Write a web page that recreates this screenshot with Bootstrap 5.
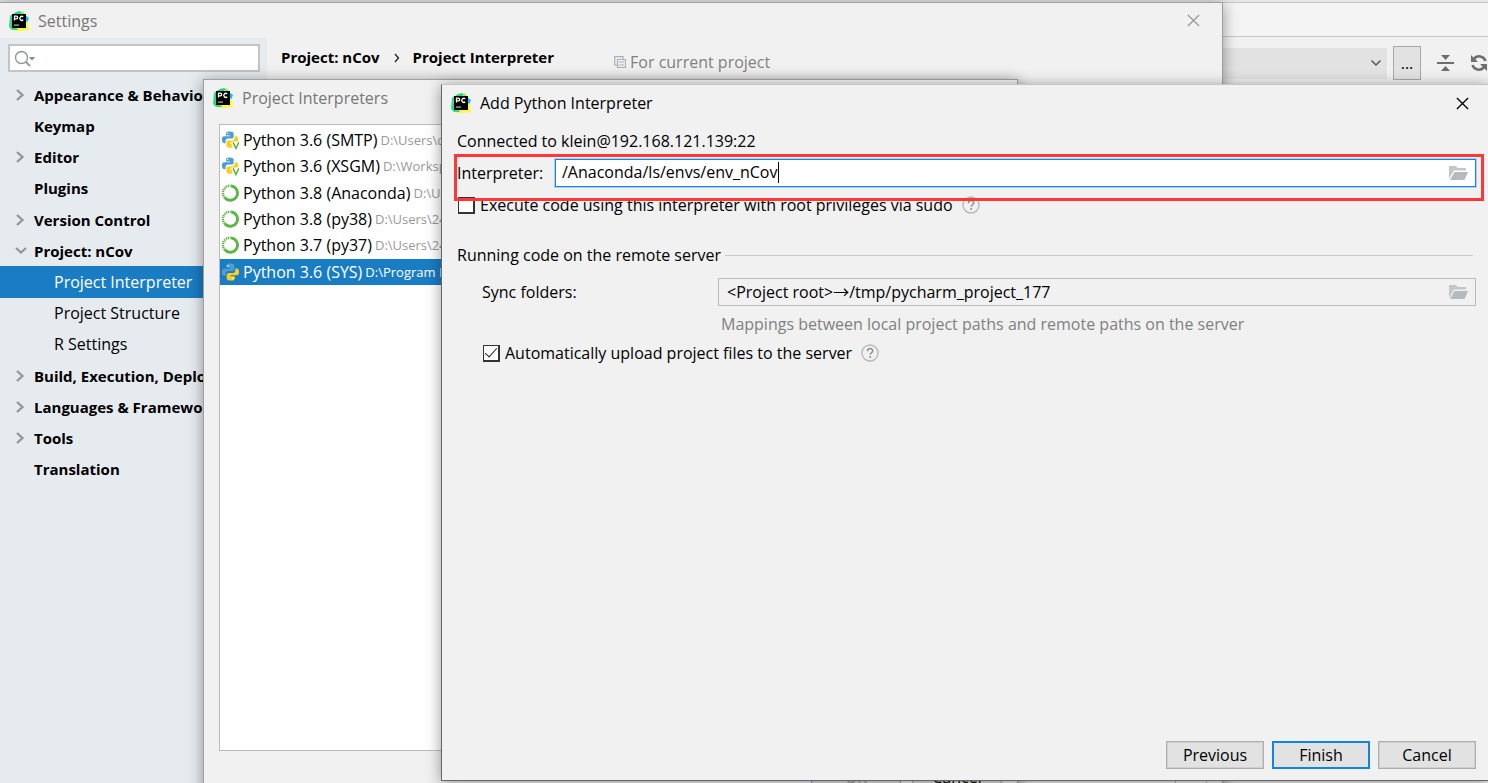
<!DOCTYPE html>
<html lang="en">
<head>
<meta charset="utf-8">
<meta name="viewport" content="width=device-width, initial-scale=1">
<title>Settings</title>
<link href="https://cdn.jsdelivr.net/npm/bootstrap@5.3.0/dist/css/bootstrap.min.css" rel="stylesheet">
<style>
  body { font-family: "Open Sans", "Noto Sans", "Noto Sans CJK SC", sans-serif; font-size: 16px; line-height: 24px; color: #000; background: #f1f1f1; }
  .desktop { height: 100vh; }
  .win { position: absolute; background: #f1f1f1; border: 1px solid #a0a0a0; box-shadow: 0 2px 14px rgba(0,0,0,.4); }
  .win-title { height: 35px; gap: 9px; padding-left: 9px; color: #777; }
  .win-close { padding: 0; border: 0; background: none; color: #999; line-height: 0; }
  .app-icon { width: 20px; height: 20px; }
  .muted { color: #808080; }

  .ide-top { height: 35px; border-top: 1px solid #c8c8c8; border-bottom: 1px solid #c8c8c8; background: #f4f4f4; }
  .ide-strip { height: 2px; background: #e6e6e6; }
  .ide-tools { gap: 6px; padding-top: 9px; }
  .combo-wrap { position: relative; }
  .combo-wrap svg { position: absolute; right: 5px; top: 11px; }
  .ide-combo { display: block; width: 200px; height: 31px; border: 0; background: #e2e2e2; appearance: none; }
  .ide-more { width: 28px; height: 34px; padding: 0; border: 1px solid #a8a8a8; background: #e2e2e2; }
  .ide-btn { padding: 0; border: 0; background: none; line-height: 0; color: #6e6e6e; }
  .ide-btn.fold { margin: 0 6px 0 10px; }

  .win-settings { left: -1px; top: 2px; right: 265px; bottom: -20px; }
  .win-settings .win-close { margin-right: 22px; }
  .settings-side { width: 267px; background: #e6ebef; padding-top: 6px; }
  .search { position: relative; margin: 0 7px 0 8px; }
  .search svg { position: absolute; left: 6px; top: 6px; }
  .search input { display: block; width: 100%; height: 28px; padding-left: 30px; border: 2px solid #c4c4c4; background: #fff; }
  .tree { display: grid; grid-auto-rows: 1fr; height: 406px; margin: 7px 0 0; padding: 0; list-style: none; }
  .tree a { display: flex; align-items: center; height: 100%; padding-left: 34px; color: #000; font-size: 15px; font-weight: 700; text-decoration: none; white-space: nowrap; position: relative; }
  .tree a.sub { padding-left: 54px; font-size: 16px; font-weight: 400; }
  .tree a.active { background: #1a7dc4; color: #fff; }
  .tree svg { position: absolute; left: 15px; }
  .crumbs { padding: 7px 0 0 14px; gap: 13px; font-size: 15px; font-weight: 700; }
  .for-project { margin-left: 47px; padding-top: 5px; gap: 4px; font-size: 16px; font-weight: 400; }
  .settings-panel { margin: 40px 15px 0 14px; border: 1px solid #b0b0b0; }
  .settings-panel-inner { margin-right: 30px; border-right: 1px solid #b0b0b0; height: 100%; }

  .win-list { left: 203px; top: 79px; right: 470px; bottom: -20px; }
  .sdk-box { margin: 9px 15px 0; height: 627px; background: #fff; border: 1px solid #bcbcbc; overflow: hidden; }
  .sdks { display: grid; grid-auto-rows: 1fr; height: 160px; margin: 0; padding: 2px 0 0; list-style: none; }
  .sdks li { display: flex; align-items: center; gap: 3px; padding-left: 1px; white-space: nowrap; }
  .sdks small { font-size: 13px; color: #999; }
  .sdks .active, .sdks .active small { background: #1a7dc4; color: #fff; }

  .win-add { left: 441px; top: 84px; right: -1px; bottom: 2px; border-color: #c4c4c4 #666 #666; }
  .win-add .win-title { height: 36px; padding-right: 19px; color: #000; }
  .add-body { padding: 8px 12px 0 15px; }
  .interp-row { position: relative; gap: 12px; margin-top: 6px; }
  .interp-row::after { content: ""; position: absolute; inset: -5px -8px -14px -3px; border: 3px solid #ff3737; pointer-events: none; }
  .interp-row label { width: 86px; white-space: nowrap; }
  .path { position: relative; }
  .path input { display: block; width: 100%; height: 28px; padding: 0 40px 2px 8px; border: 1px solid #bcbcbc; background: #f1f1f1; outline: 0; color: #000; }
  .path.focus input { border: 1px solid #1a83dc; box-shadow: 0 0 0 1px #a9d0f0; background: #fff; padding-left: 6px; }
  .path button { position: absolute; right: 7px; top: 7px; padding: 0; border: 0; background: none; line-height: 0; }
  .caret { position: absolute; left: 223px; top: 3px; width: 1px; height: 21px; background: #000; }
  .tick { appearance: none; width: 17px; height: 17px; margin: 0; border: 2px solid #333; border-width: 1px 2px 2px 1px; background: #fff; display: inline-grid; place-content: center; }
  .tick:checked::before { content: ""; width: 12px; height: 6px; margin-top: -4px; border: solid #222; border-width: 0 0 1px 1px; transform: rotate(-48deg); }
  .tick-row { gap: 5px; }
  .tick-row svg { margin-left: 4px; }
  .root-row { margin-top: 6px; padding-left: 1px; }
  .section { gap: 4px; margin-top: 26px; }
  .section hr { margin: 0 3px 0 0; border-color: #c8c8c8; opacity: 1; }
  .sync-row { margin-top: 11px; padding-left: 25px; }
  .sync-row label { width: 236px; }
  .hint { margin: 6px 0 0 264px; }
  .auto-row { margin-top: 5px; padding-left: 26px; }
  .foot { gap: 8px; padding: 0 12px 11px; }
  .dlg-btn { width: 98px; height: 28px; padding: 0; border: 1px solid #adadad; outline: 1px solid #d0d0d0; outline-offset: -2px; background: #e2e2e2; color: #000; line-height: 24px; }
  .dlg-btn.default { border: 2px solid #0f86e0; outline: 0; line-height: 22px; }
  .back-foot { gap: 11px; margin-top: 10px; padding-right: 15px; }
  .back-foot .dlg-btn { width: 90px; height: 32px; }
  .back-foot .dlg-btn:first-child { color: #999; border-color: #5aa0d8; }
</style>
</head>
<body>
<svg width="0" height="0" class="position-absolute" aria-hidden="true">
  <defs>
    <symbol id="pycharm" viewBox="0 0 20 20">
      <path d="M1 5 7 1l4-1 4 3 2 4-1 11-9 1-6-2z" fill="#21d789"/>
      <path d="M11 3 14 0l2 4 1 3-5 1z" fill="#a8e84c"/>
      <path d="M16 4l4 3-2 5-2-1z" fill="#07c3f2"/>
      <path d="M5 14l11-4 3 1 1 8-8 1H5z" fill="#fcf84a"/>
      <path d="M0 16l1-11 3-2 1 10 4 6-6 0z" fill="#2fd98a"/>
      <path d="M3 3h14v14H3z" fill="#000"/>
      <path d="M5.500 9.500V5.200h1.800a1.300 1.300 0 0 1 0 2.700H5.500M14.200 5.900a2 2 0 1 0 0 2.900" fill="none" stroke="#fff" stroke-width="1.300"/>
      <path d="M5 13.500h5v1.200H5z" fill="#bbb"/>
    </symbol>
    <symbol id="python" viewBox="0 0 20 20">
      <path d="M9.500 1C6 1 5.500 2.300 5.500 3.500v2h4.500v1H3.500C1.500 6.500 1 8.300 1 10.300s.6 3.700 2.500 3.700H5v-2.300c0-1.700 1.300-2.700 2.800-2.700h4c1.300 0 2.200-1 2.200-2.300V3.500C14 1.800 12.500 1 9.500 1z" fill="#4b9fd1"/>
      <circle cx="7.500" cy="3.400" r=".8" fill="#fff"/>
      <path d="M10.500 19c3.500 0 4-1.300 4-2.500v-2H10v-1h6.500c2 0 2.500-1.500 2.500-3.500S18.400 6.300 16.500 6.300H15v2c0 1.700-1.300 2.700-2.800 2.700h-4C6.900 11 6 12 6 13.300v3.200c0 1.700 1.500 2.500 4.500 2.500z" fill="#fdcd1e"/>
      <circle cx="12.500" cy="16.600" r=".8" fill="#fff"/>
    </symbol>
    <symbol id="venv" viewBox="0 0 20 20">
      <use href="#python" width="19" height="19"/>
      <path d="M11 11.500h9V20h-7z" fill="#fff"/><path d="M12.700 12.500 15.700 19l3-6.500" fill="none" stroke="#5fae3f" stroke-width="1.500"/>
    </symbol>
    <symbol id="conda" viewBox="0 0 20 20">
      <path d="M10.500 2.500A7.600 7.600 0 1 1 4 15" fill="none" stroke="#5cb544" stroke-width="3"/>
      <path d="M4 15A7.600 7.600 0 0 1 10 2.300" fill="none" stroke="#5cb544" stroke-width="2.600" stroke-dasharray="1.300 .8"/>
    </symbol>
    <symbol id="right" viewBox="0 0 10 14"><path d="M2 2l5.500 5L2 12" fill="none" stroke="#939699" stroke-width="2.300"/></symbol>
    <symbol id="down" viewBox="0 0 12 14"><path d="M1 4l5 4.500L11 4" fill="none" stroke="#939699" stroke-width="2.200"/></symbol>
    <symbol id="cross" viewBox="0 0 14 14"><path d="M1 1l12 12M13 1 1 13" fill="none" stroke="currentColor" stroke-width="1.400"/></symbol>
    <symbol id="folder" viewBox="0 0 20 15"><path d="M0 13V0h7l1.500 2H17v2.500H5z" fill="#c3c7ca"/><path d="M5.500 6H19l-3.500 8H1z" fill="#b5babe"/></symbol>
    <symbol id="help" viewBox="0 0 18 18"><circle cx="9" cy="9" r="8" fill="none" stroke="#b4babe" stroke-width="1.400"/><path d="M6.500 7.200c0-3.500 5.200-3.300 5.200-.3 0 1.900-2.500 1.800-2.500 3.900M9.200 12v1.900" fill="none" stroke="#8a9196" stroke-width="1.500"/></symbol>
  </defs>
</svg>

<main class="desktop position-relative overflow-hidden">
  <div class="ide-strip"></div>
  <div class="ide-top"></div>
  <div class="ide-tools d-flex justify-content-end align-items-center">
    <div class="combo-wrap"><select class="ide-combo" aria-label="Run configuration"><option></option></select>
      <svg width="12" height="8" viewBox="0 0 12 8"><path d="M1.500 1.500 6 6l4.500-4.500" fill="none" stroke="#555" stroke-width="1.500"/></svg></div>
    <button class="ide-more">...</button>
    <button class="ide-btn fold" aria-label="Collapse"><svg width="17" height="18" viewBox="0 0 17 18"><path d="M4 1h9L8.500 6zM4 17h9l-4.500-5zM0 8h17v2H0z" fill="currentColor"/></svg></button>
    <button class="ide-btn ms-1" aria-label="Refresh"><svg width="18" height="18" viewBox="0 0 18 18"><path d="M15.500 7A6.500 6.500 0 0 0 4 5M2.500 11A6.500 6.500 0 0 0 14 13" fill="none" stroke="currentColor" stroke-width="2.600"/><path d="M1 1v7h7zM17 17v-7h-7z" fill="currentColor"/></svg></button>
  </div>

  <section class="win win-settings d-flex flex-column" aria-label="Settings">
    <header class="win-title d-flex align-items-center">
      <svg class="app-icon"><use href="#pycharm"/></svg><span>Settings</span>
      <button class="win-close ms-auto" aria-label="Close"><svg width="13" height="13"><use href="#cross"/></svg></button>
    </header>
    <div class="d-flex flex-grow-1">
      <nav class="settings-side">
        <div class="search"><input type="text" aria-label="Search settings"><svg width="22" height="18" viewBox="0 0 22 18"><circle cx="7.500" cy="7.500" r="6" fill="none" stroke="#8e979d" stroke-width="1.400"/><path d="M12 12l4 4" stroke="#8e979d" stroke-width="1.800"/><path d="M15 7h6l-3 3.500z" fill="#7f8b91"/></svg></div>
        <ul class="tree">
          <li><a href="#"><svg width="10" height="14"><use href="#right"/></svg>Appearance &amp; Behavior</a></li>
          <li><a href="#">Keymap</a></li>
          <li><a href="#"><svg width="10" height="14"><use href="#right"/></svg>Editor</a></li>
          <li><a href="#">Plugins</a></li>
          <li><a href="#"><svg width="10" height="14"><use href="#right"/></svg>Version Control</a></li>
          <li><a href="#"><svg width="12" height="14"><use href="#down"/></svg>Project: nCov</a></li>
          <li><a href="#" class="sub active">Project Interpreter</a></li>
          <li><a href="#" class="sub">Project Structure</a></li>
          <li><a href="#" class="sub">R Settings</a></li>
          <li><a href="#"><svg width="10" height="14"><use href="#right"/></svg>Build, Execution, Deployment</a></li>
          <li><a href="#"><svg width="10" height="14"><use href="#right"/></svg>Languages &amp; Frameworks</a></li>
          <li><a href="#"><svg width="10" height="14"><use href="#right"/></svg>Tools</a></li>
          <li><a href="#">Translation</a></li>
        </ul>
      </nav>
      <div class="flex-grow-1 d-flex flex-column">
        <div class="crumbs d-flex">
          <span>Project: nCov</span>
          <svg class="mt-2" width="7" height="10" viewBox="0 0 7 10"><path d="M2 1l3.500 4L2 9" fill="none" stroke="#222" stroke-width="1.300"/></svg>
          <span>Project Interpreter</span>
          <span class="for-project muted d-flex align-items-center"><svg width="12" height="12" viewBox="0 0 12 12"><path d="M3 9H.7V.7H9V3M3.500 3.500h8v8h-8zM5 6h5M5 9h5" fill="none" stroke="#a9b1b6" stroke-width="1.200"/></svg>For current project</span>
        </div>
        <div class="settings-panel flex-grow-1"><div class="settings-panel-inner"></div></div>
      </div>
    </div>
  </section>

  <section class="win win-list" aria-label="Project Interpreters">
    <header class="win-title d-flex align-items-center"><svg class="app-icon"><use href="#pycharm"/></svg><span>Project Interpreters</span></header>
    <div class="sdk-box">
      <ul class="sdks">
        <li><svg width="19" height="20"><use href="#venv"/></svg><span>Python 3.6 (SMTP)</span><small>D:\Users\d</small></li>
        <li><svg width="19" height="20"><use href="#venv"/></svg><span>Python 3.6 (XSGM)</span><small>D:\Workspace</small></li>
        <li><svg width="19" height="20"><use href="#conda"/></svg><span>Python 3.8 (Anaconda)</span><small>D:\Users</small></li>
        <li><svg width="19" height="20"><use href="#conda"/></svg><span>Python 3.8 (py38)</span><small>D:\Users\24</small></li>
        <li><svg width="19" height="20"><use href="#conda"/></svg><span>Python 3.7 (py37)</span><small>D:\Users\24</small></li>
        <li class="active"><svg width="19" height="20"><use href="#python"/></svg><span>Python 3.6 (SYS)</span><small>D:\Program Files</small></li>
      </ul>
    </div>
    <div class="back-foot d-flex justify-content-end"><button class="dlg-btn">OK</button><button class="dlg-btn">Cancel</button></div>
  </section>

  <section class="win win-add d-flex flex-column" role="dialog" aria-label="Add Python Interpreter">
    <header class="win-title d-flex align-items-center">
      <svg class="app-icon"><use href="#pycharm"/></svg><span>Add Python Interpreter</span>
      <button class="win-close ms-auto text-black" aria-label="Close"><svg width="13" height="13"><use href="#cross"/></svg></button>
    </header>
    <div class="add-body flex-grow-1">
      <div>Connected to klein@192.168.121.139:22</div>
      <div class="interp-row d-flex align-items-center">
        <label for="interp">Interpreter:</label>
        <div class="path focus flex-grow-1"><input id="interp" type="text" value="/Anaconda/ls/envs/env_nCov"><span class="caret"></span>
          <button aria-label="Browse"><svg width="20" height="15"><use href="#folder"/></svg></button></div>
      </div>
      <div class="tick-row root-row d-flex align-items-center">
        <input class="tick" type="checkbox" id="root"><label for="root">Execute code using this interpreter with root privileges via sudo</label>
        <svg width="18" height="18"><use href="#help"/></svg>
      </div>
      <div class="section d-flex align-items-center"><span>Running code on the remote server</span><hr class="flex-grow-1"></div>
      <div class="sync-row d-flex align-items-center">
        <label for="sync">Sync folders:</label>
        <div class="path flex-grow-1"><input id="sync" type="text" readonly value="&lt;Project root&gt;→/tmp/pycharm_project_177">
          <button aria-label="Browse"><svg width="20" height="15"><use href="#folder"/></svg></button></div>
      </div>
      <div class="hint muted">Mappings between local project paths and remote paths on the server</div>
      <div class="tick-row auto-row d-flex align-items-center">
        <input class="tick" type="checkbox" id="auto" checked><label for="auto">Automatically upload project files to the server</label>
        <svg width="18" height="18"><use href="#help"/></svg>
      </div>
    </div>
    <footer class="foot d-flex justify-content-end">
      <button class="dlg-btn">Previous</button><button class="dlg-btn default">Finish</button><button class="dlg-btn">Cancel</button>
    </footer>
  </section>
</main>
<script src="https://cdn.jsdelivr.net/npm/bootstrap@5.3.0/dist/js/bootstrap.bundle.min.js"></script>
</body>
</html>
